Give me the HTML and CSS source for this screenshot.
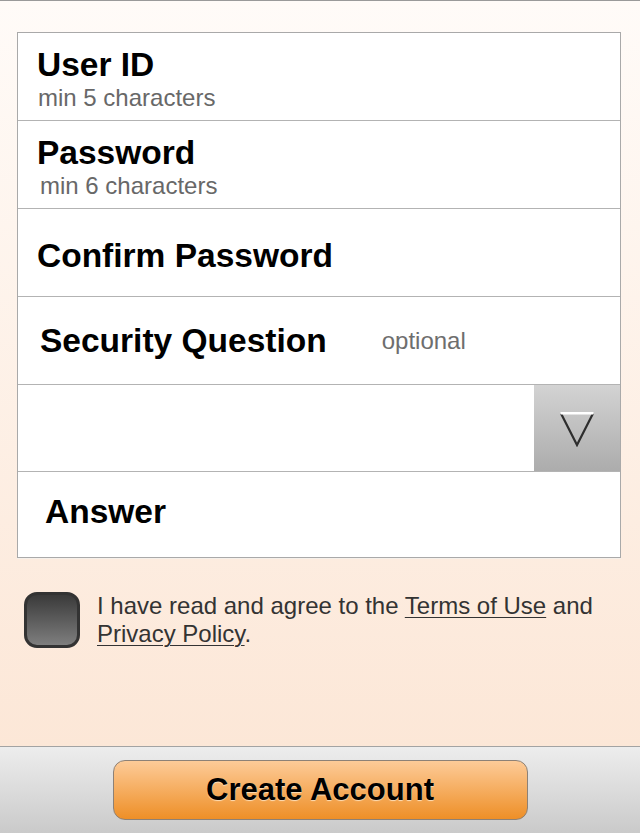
FILE: index.html
```html
<!DOCTYPE html>
<html lang="en">
<head>
<meta charset="utf-8">
<title>Create Account</title>
<link rel="stylesheet" href="styles.css">
</head>
<body>
<main class="content">
  <div class="form">
    <div class="row row-stack">
      <div class="label">User ID</div>
      <div class="hint">min 5 characters</div>
    </div>
    <div class="row row-stack">
      <div class="label">Password</div>
      <div class="hint hint-pw">min 6 characters</div>
    </div>
    <div class="row row-center row-confirm">
      <div class="label">Confirm Password</div>
    </div>
    <div class="row row-center row-question">
      <div class="label">Security Question</div>
      <div class="optional">optional</div>
    </div>
    <div class="row row-select">
      <div class="select-value"></div>
      <div class="select-btn">
        <svg class="arrow" width="34" height="35" viewBox="0 0 34 35">
          <polyline points="1,1.5 17,33 33,1.5" fill="none" stroke="#2e2e2e" stroke-width="2.2"/>
          <line x1="0.5" y1="1.2" x2="33.5" y2="1.2" stroke="#ffffff" stroke-width="2.4"/>
        </svg>
      </div>
    </div>
    <div class="row row-center row-answer">
      <div class="label">Answer</div>
    </div>
  </div>
  <div class="consent">
    <div class="checkbox"></div>
    <p class="consent-text">I have read and agree to the <a class="link" href="#">Terms of Use</a> and <a class="link" href="#">Privacy Policy</a>.</p>
  </div>
</main>
<footer class="footer">
  <button class="create" type="button">Create Account</button>
</footer>
</body>
</html>
```

FILE: styles.css
```css
html, body {
  margin: 0;
  padding: 0;
}

body {
  width: 640px;
  height: 833px;
  display: flex;
  flex-direction: column;
  overflow: hidden;
  font-family: "Liberation Sans", Arial, Helvetica, sans-serif;
}

.content {
  flex: 1;
  border-top: 1px solid #9a9a9a;
  background: linear-gradient(#fffbf8, #fce7d7);
  padding: 31px 19px 0 17px;
}

.form {
  background: #ffffff;
  border: 1px solid #a9a9a9;
  box-shadow: 0 1px 0 #f6f0ea;
}

.row {
  height: 87px;
  border-bottom: 1px solid #b3b3b3;
}

.label {
  font-weight: bold;
  font-size: 33.5px;
  line-height: 36px;
  color: #000;
}

.row-stack {
  padding: 14px 0 0 19px;
  box-sizing: border-box;
  height: 88px;
}

.hint {
  font-size: 24px;
  line-height: 28px;
  color: #686868;
  margin-top: 1px;
  padding-left: 1px;
}

.hint-pw {
  padding-left: 3px;
}

.row-center {
  display: flex;
  align-items: center;
}

.row-confirm {
  padding-left: 19px;
  padding-top: 6px;
  box-sizing: border-box;
  height: 88px;
}

.row-question {
  padding-left: 22px;
}

.optional {
  margin-left: 55px;
  font-size: 24px;
  color: #6e6e6e;
}

.row-select {
  height: 86px;
  display: flex;
}

.select-value {
  flex: 1;
}

.select-btn {
  width: 86px;
  background: linear-gradient(#d3d3d3, #acacac);
  display: flex;
  align-items: center;
  justify-content: center;
  padding-top: 2px;
  box-sizing: border-box;
}

.arrow {
  display: block;
}

.row-answer {
  height: 85px;
  border-bottom: none;
  padding-left: 27px;
  padding-bottom: 5px;
  box-sizing: border-box;
}

.consent {
  display: flex;
  align-items: flex-start;
  margin-top: 34px;
  padding-left: 7px;
  gap: 17px;
}

.checkbox {
  flex: none;
  width: 56px;
  height: 56px;
  box-sizing: border-box;
  border: 3px solid #333333;
  border-radius: 13px;
  background: linear-gradient(#3a3a3a, #7e7e7e);
}

.consent-text {
  margin: 0;
  font-size: 24px;
  line-height: 28px;
  color: #333333;
}

.link {
  color: #333333;
  text-decoration: underline;
  text-decoration-thickness: 1px;
  text-underline-offset: 3px;
}

.footer {
  height: 87px;
  box-sizing: border-box;
  border-top: 1px solid #a3a3a3;
  background: linear-gradient(#ededed, #cacaca);
  padding-top: 13px;
  display: flex;
  justify-content: center;
  align-items: flex-start;
}

.create {
  width: 415px;
  height: 60px;
  border: 1px solid #8d8176;
  border-radius: 12px;
  background: linear-gradient(#fdcb98, #ee8f27);
  font-family: "Liberation Sans", Arial, Helvetica, sans-serif;
  font-weight: bold;
  font-size: 31px;
  color: #000;
  text-shadow: 0 1px 1px rgba(255, 236, 210, 0.8);
  padding: 0;
  cursor: pointer;
}
```
